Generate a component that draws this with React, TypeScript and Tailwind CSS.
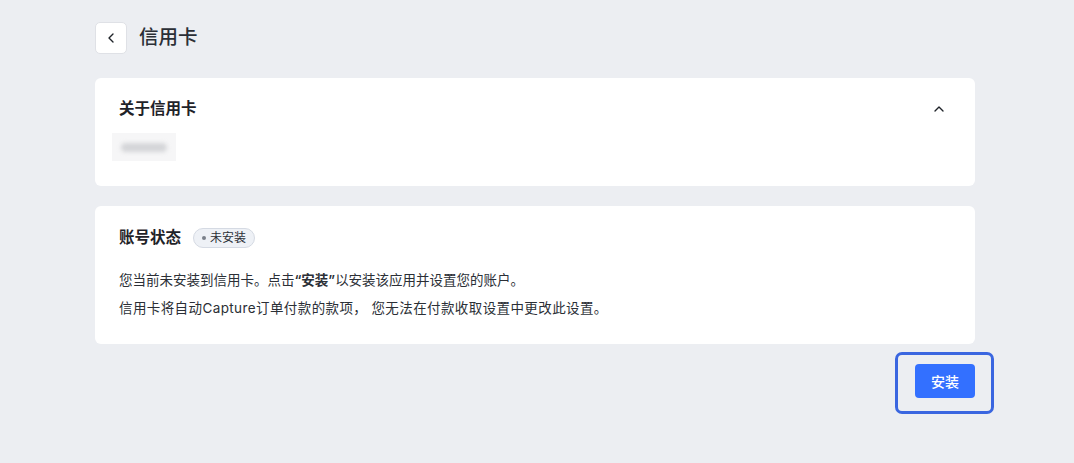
import React from "react";
import { ChevronLeft, ChevronUp } from "lucide-react";

export default function App() {
  return (
    <div
      className="min-h-[463px] w-full bg-[#eceef2] text-[#1f2329]"
      style={{ fontFamily: '"Inter", "Noto Sans CJK SC", sans-serif' }}
    >
      <div className="ml-[95px] w-[880px] pt-[22px]">
        {/* Header */}
        <div className="flex items-center gap-3">
          <button className="flex h-[32px] w-[32px] items-center justify-center rounded-[5px] border border-[#dfe1e6] bg-white">
            <ChevronLeft size={16} strokeWidth={2} className="text-[#1f2329]" />
          </button>
          <h1 className="text-[19.5px] font-medium leading-none text-[#2b2f36]">信用卡</h1>
        </div>

        {/* About card */}
        <div className="mt-[24px] h-[108px] rounded-[6px] bg-white px-[24px] pt-[20px]">
          <div className="flex items-center justify-between">
            <h2 className="text-[15.5px] font-semibold leading-[22px]">关于信用卡</h2>
            <ChevronUp size={16} strokeWidth={2} className="mr-[4px] text-[#1f2329]" />
          </div>
          <div className="-ml-[7px] mt-[13px] flex h-[28px] w-[64px] items-center justify-center bg-[#f6f6f7]">
            <div className="h-[9px] w-[46px] rounded-full bg-[#d4d5d8] blur-[2px]" />
          </div>
        </div>

        {/* Account status card */}
        <div className="mt-[20px] h-[138px] rounded-[6px] bg-white px-[24px] pt-[21px]">
          <div className="flex items-center gap-[12px]">
            <h2 className="text-[15.5px] font-semibold leading-[22px]">账号状态</h2>
            <span className="flex h-[20px] items-center gap-[4px] rounded-full border border-[#d5dae3] bg-[#eef1f6] px-[8px] text-[12px] leading-none text-[#2b2f36]">
              <span className="h-[4px] w-[4px] rounded-full bg-[#7a808a]" />
              未安装
            </span>
          </div>
          <div className="mt-[21px] space-y-[8px] text-[13.5px] leading-[20px] text-[#2b2f36]">
            <p>
              您当前未安装到信用卡。点击<span className="font-semibold">“安装”</span>以安装该应用并设置您的账户。
            </p>
            <p className="tracking-[0.4px]">
              信用卡将自动Capture订单付款的款项，&nbsp;您无法在付款收取设置中更改此设置。
            </p>
          </div>
        </div>

        {/* Footer */}
        <div className="mt-[20px] flex justify-end">
          <div className="relative">
            <button className="h-[34px] w-[60px] rounded-[4px] bg-[#3370ff] text-[14px] font-medium text-white">
              安装
            </button>
            <div className="pointer-events-none absolute -left-[20px] -right-[19px] -top-[12px] -bottom-[16px] rounded-[7px] border-[3px] border-[#3a66e0]" />
          </div>
        </div>
      </div>
    </div>
  );
}
